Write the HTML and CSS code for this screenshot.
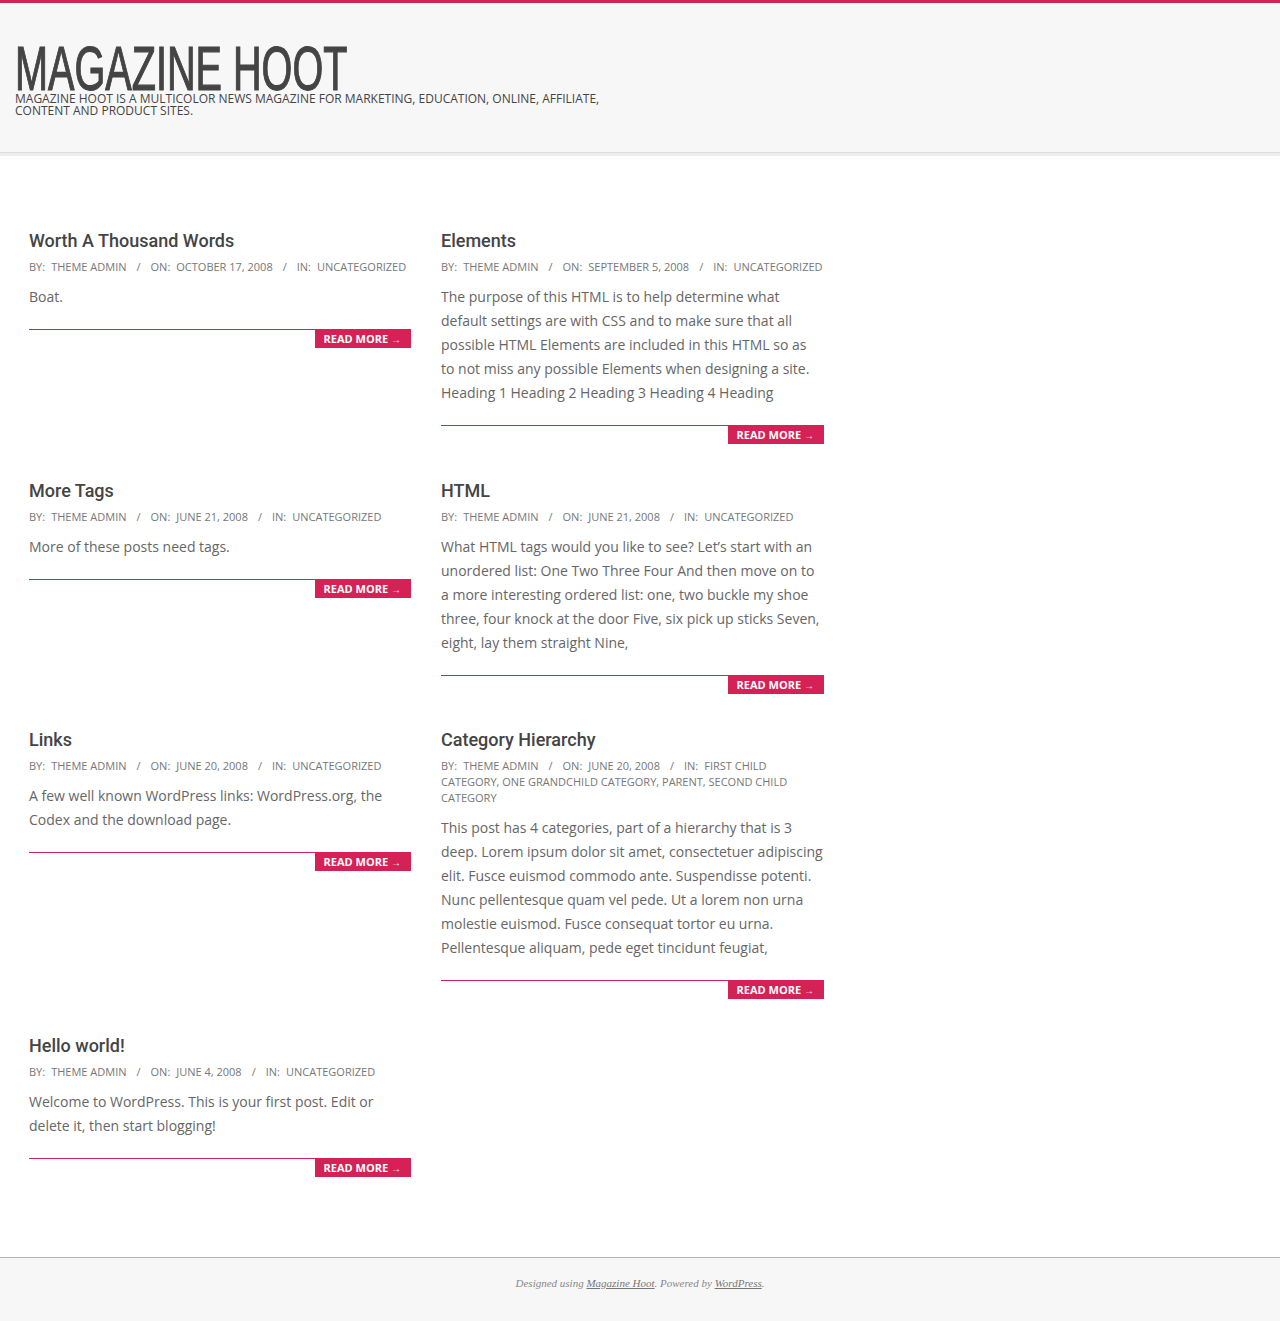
FILE: index.html
```html
<!DOCTYPE html>
<html lang="en">
<head>
<meta charset="utf-8">
<title>Magazine Hoot</title>
<link rel="stylesheet" href="styles.css">
</head>
<body>
<header class="site-header">
  <div class="branding">
    <h1 class="site-title"><span class="site-title-text">MAGAZINE HOOT</span></h1>
    <p class="site-desc">Magazine Hoot is a multicolor news magazine for marketing, education, online, affiliate, content and product sites.</p>
  </div>
</header>

<main class="content">
  <div class="posts">
    <article class="post">
      <h2 class="post-title">Worth A Thousand Words</h2>
      <div class="meta"><span class="lbl">By:</span><span class="val">Theme Admin</span><span class="sep">/</span><span class="lbl">On:</span><span class="val">October 17, 2008</span><span class="sep">/</span><span class="lbl">In:</span><span class="val">Uncategorized</span></div>
      <p class="excerpt">Boat.</p>
      <div class="more-bar"><a class="more" href="#">Read More <span class="arr">&rarr;</span></a></div>
    </article>
    <article class="post">
      <h2 class="post-title">Elements</h2>
      <div class="meta"><span class="lbl">By:</span><span class="val">Theme Admin</span><span class="sep">/</span><span class="lbl">On:</span><span class="val">September 5, 2008</span><span class="sep">/</span><span class="lbl">In:</span><span class="val">Uncategorized</span></div>
      <p class="excerpt">The purpose of this HTML is to help determine what default settings are with CSS and to make sure that all possible HTML Elements are included in this HTML so as to not miss any possible Elements when designing a site. Heading 1 Heading 2 Heading 3 Heading 4 Heading</p>
      <div class="more-bar"><a class="more" href="#">Read More <span class="arr">&rarr;</span></a></div>
    </article>
    <article class="post">
      <h2 class="post-title">More Tags</h2>
      <div class="meta"><span class="lbl">By:</span><span class="val">Theme Admin</span><span class="sep">/</span><span class="lbl">On:</span><span class="val">June 21, 2008</span><span class="sep">/</span><span class="lbl">In:</span><span class="val">Uncategorized</span></div>
      <p class="excerpt">More of these posts need tags.</p>
      <div class="more-bar"><a class="more" href="#">Read More <span class="arr">&rarr;</span></a></div>
    </article>
    <article class="post">
      <h2 class="post-title">HTML</h2>
      <div class="meta"><span class="lbl">By:</span><span class="val">Theme Admin</span><span class="sep">/</span><span class="lbl">On:</span><span class="val">June 21, 2008</span><span class="sep">/</span><span class="lbl">In:</span><span class="val">Uncategorized</span></div>
      <p class="excerpt">What HTML tags would you like to see? Let’s start with an unordered list: One Two Three Four And then move on to a more interesting ordered list: one, two buckle my shoe three, four knock at the door Five, six pick up sticks Seven, eight, lay them straight Nine,</p>
      <div class="more-bar"><a class="more" href="#">Read More <span class="arr">&rarr;</span></a></div>
    </article>
    <article class="post">
      <h2 class="post-title">Links</h2>
      <div class="meta"><span class="lbl">By:</span><span class="val">Theme Admin</span><span class="sep">/</span><span class="lbl">On:</span><span class="val">June 20, 2008</span><span class="sep">/</span><span class="lbl">In:</span><span class="val">Uncategorized</span></div>
      <p class="excerpt">A few well known WordPress links: WordPress.org, the Codex and the download page.</p>
      <div class="more-bar"><a class="more" href="#">Read More <span class="arr">&rarr;</span></a></div>
    </article>
    <article class="post">
      <h2 class="post-title">Category Hierarchy</h2>
      <div class="meta"><span class="lbl">By:</span><span class="val">Theme Admin</span><span class="sep">/</span><span class="lbl">On:</span><span class="val">June 20, 2008</span><span class="sep">/</span><span class="lbl">In:</span><span class="val">First Child Category, One Grandchild Category, Parent, Second Child Category</span></div>
      <p class="excerpt">This post has 4 categories, part of a hierarchy that is 3 deep. Lorem ipsum dolor sit amet, consectetuer adipiscing elit. Fusce euismod commodo ante. Suspendisse potenti. Nunc pellentesque quam vel pede. Ut a lorem non urna molestie euismod. Fusce consequat tortor eu urna. Pellentesque aliquam, pede eget tincidunt feugiat,</p>
      <div class="more-bar"><a class="more" href="#">Read More <span class="arr">&rarr;</span></a></div>
    </article>
    <article class="post">
      <h2 class="post-title">Hello world!</h2>
      <div class="meta"><span class="lbl">By:</span><span class="val">Theme Admin</span><span class="sep">/</span><span class="lbl">On:</span><span class="val">June 4, 2008</span><span class="sep">/</span><span class="lbl">In:</span><span class="val">Uncategorized</span></div>
      <p class="excerpt">Welcome to WordPress. This is your first post. Edit or delete it, then start blogging!</p>
      <div class="more-bar"><a class="more" href="#">Read More <span class="arr">&rarr;</span></a></div>
    </article>
  </div>
</main>

<footer class="site-footer">
  <p class="credit">Designed using <a href="#">Magazine Hoot</a>. Powered by <a href="#">WordPress</a>.</p>
</footer>
</body>
</html>
```
FILE: styles.css
```css
html, body {
  margin: 0;
  padding: 0;
}
body {
  background: #fff;
  font-family: "Open Sans", "Liberation Sans", sans-serif;
  color: #666;
}
.site-header {
  border-top: 3px solid #d42257;
  background: #f7f7f7;
  border-bottom: 1px solid #dddddd;
  box-shadow: 0 3px 0 #eeeeee;
  height: 153px;
  box-sizing: border-box;
}
.branding {
  padding: 40px 15px 0 15px;
  width: 620px;
}
.site-title {
  margin: 0;
  font-family: "Liberation Sans", sans-serif;
  font-weight: normal;
  font-size: 63px;
  line-height: 51px;
  color: #444;
  white-space: nowrap;
}
.site-title-text {
  display: inline-block;
  transform: scaleX(0.629);
  transform-origin: left center;
  -webkit-text-stroke: 1.2px #444;
}
.site-desc {
  margin: -1px 0 0 0;
  font-size: 12px;
  line-height: 12px;
  text-transform: uppercase;
  color: #444;
}
.content {
  padding: 76px 0 80px 29px;
}
.posts {
  display: grid;
  grid-template-columns: 382px 383px;
  column-gap: 30px;
  row-gap: 34.5px;
  align-items: start;
}
.post-title {
  margin: 0;
  font-family: Roboto, "Liberation Sans", sans-serif;
  font-weight: 500;
  font-size: 18px;
  line-height: 24px;
  color: #444;
}
.meta {
  margin-top: 6px;
  font-size: 11px;
  line-height: 16px;
  text-transform: uppercase;
  color: #777;
}
.lbl {
  margin-right: 6px;
}
.sep {
  margin: 0 10px;
}
.excerpt {
  margin: 10px 0 0 0;
  padding-right: 1px;
  font-size: 14px;
  line-height: 24px;
  color: #666;
}
.more-bar {
  margin-top: 20px;
  border-top: 1px solid #d42257;
  display: flex;
  justify-content: flex-end;
}
.more {
  display: block;
  background: #d42257;
  color: #fff;
  text-decoration: none;
  font-size: 11px;
  font-weight: bold;
  text-transform: uppercase;
  line-height: 18px;
  height: 18px;
  padding: 0 10px 0 9px;
}
.arr {
  font-size: 10px;
  font-weight: normal;
}
.site-footer {
  border-top: 1px solid #b5b5b5;
  background: #f7f7f7;
  height: 63px;
  display: flex;
  justify-content: center;
}
.credit {
  margin: 18px 0 0 0;
  font-family: "Liberation Serif", "DejaVu Serif", serif;
  font-style: italic;
  font-size: 11px;
  line-height: 14px;
  color: #888;
}
.credit a {
  color: #777;
}
```
